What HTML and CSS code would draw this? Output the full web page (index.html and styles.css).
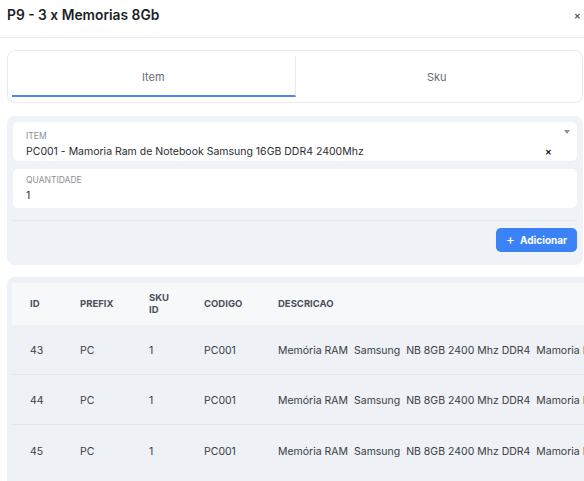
FILE: index.html
```html
<!DOCTYPE html>
<html lang="pt">
<head>
<meta charset="utf-8">
<link rel="stylesheet" href="styles.css">
</head>
<body>
<div class="header">
  <div class="title">P9 - 3 x Memorias 8Gb</div>
  <div class="close">&#x2715;</div>
</div>
<div class="content">
  <div class="tabs">
    <div class="tab active">Item</div>
    <div class="tab">Sku</div>
  </div>
  <div class="form">
    <div class="field select">
      <div class="label">ITEM</div>
      <div class="value">PC001 - Mamoria Ram de Notebook Samsung 16GB DDR4 2400Mhz</div>
      <span class="caret"></span>
      <span class="clear">&#x2715;</span>
    </div>
    <div class="field">
      <div class="label">QUANTIDADE</div>
      <div class="value">1</div>
    </div>
    <div class="actions">
      <button class="btn"><span class="plus">+</span>Adicionar</button>
    </div>
  </div>
  <div class="table">
    <div class="row head">
      <div>ID</div><div>PREFIX</div><div class="narrow">SKU ID</div><div>CODIGO</div><div>DESCRICAO</div>
    </div>
    <div class="row">
      <div>43</div><div>PC</div><div>1</div><div>PC001</div><div class="desc">Memória RAM  Samsung  NB 8GB 2400 Mhz DDR4  Mamoria Ram de Notebook</div>
    </div>
    <div class="row">
      <div>44</div><div>PC</div><div>1</div><div>PC001</div><div class="desc">Memória RAM  Samsung  NB 8GB 2400 Mhz DDR4  Mamoria Ram de Notebook</div>
    </div>
    <div class="row">
      <div>45</div><div>PC</div><div>1</div><div>PC001</div><div class="desc">Memória RAM  Samsung  NB 8GB 2400 Mhz DDR4  Mamoria Ram de Notebook</div>
    </div>
  </div>
</div>
</body>
</html>
```
FILE: styles.css
```css
html, body {
  margin: 0;
  overflow: hidden;
  background: #ffffff;
  font-family: Inter, "Noto Sans", sans-serif;
  color: #222;
}
.header {
  height: 32px;
  padding: 5px 3px 0 7px;
  display: flex;
  justify-content: space-between;
  align-items: flex-start;
  border-bottom: 1px solid #eef0f3;
}
.title {
  font-size: 13.8px;
  line-height: 20px;
  font-weight: 600;
  color: #1b1f27;
}
.close {
  font-size: 8px;
  line-height: 22px;
  color: #555;
  font-weight: 700;
}
.content {
  width: 576px;
  padding: 12px 0 0 7px;
}
.tabs {
  display: flex;
  border: 1px solid #e8eaee;
  border-radius: 8px;
  padding: 5px 4px;
}
.tab {
  flex: 1;
  height: 41px;
  display: flex;
  align-items: center;
  justify-content: center;
  font-size: 11px;
  color: #666b73;
  box-sizing: border-box;
}
.tab.active {
  border-bottom: 2px solid #4f86f0;
  border-right: 1px solid #e6e8eb;
  padding-top: 2px;
}
.form {
  margin-top: 13px;
  background: #eff2f7;
  border-radius: 8px;
  padding: 6px 6px 13px;
  display: flex;
  flex-direction: column;
  gap: 8px;
}
.field {
  position: relative;
  background: #ffffff;
  border-radius: 5px;
  padding: 5px 13px 3px;
  height: 31px;
}
.field.select {
  padding: 8px 13px 0;
}
.label {
  font-size: 8.5px;
  line-height: 12px;
  color: #8a8f96;
  margin-bottom: 2px;
}
.value {
  font-size: 10.5px;
  line-height: 16px;
  color: #2a2d32;
}
.caret {
  position: absolute;
  right: 7px;
  top: 8px;
  width: 0;
  height: 0;
  border-left: 3px solid transparent;
  border-right: 3px solid transparent;
  border-top: 4px solid #8d9198;
}
.clear {
  position: absolute;
  right: 25px;
  top: 25px;
  font-size: 8px;
  font-weight: 700;
  color: #111;
}
.actions {
  border-top: 1px solid #e3e7ed;
  margin-top: 4px;
  padding-top: 7px;
  display: flex;
  justify-content: flex-end;
}
.btn {
  width: 81px;
  height: 24px;
  border: none;
  border-radius: 5px;
  background: #3b82f6;
  color: #fff;
  font-family: Inter, "Noto Sans", sans-serif;
  font-size: 10px;
  font-weight: 700;
  display: flex;
  align-items: center;
  justify-content: center;
  gap: 5px;
  padding: 0;
}
.plus {
  font-size: 14px;
  font-weight: 400;
  line-height: 14px;
  margin-top: -2px;
}
.table {
  margin-top: 12px;
  width: 700px;
  background: #eef1f6;
  border-radius: 8px;
  padding: 6px 0 0 5px;
  height: 220px;
}
.row {
  display: grid;
  grid-template-columns: 50px 69px 55px 74px 1fr;
  padding-left: 18px;
  padding-top: 2px;
  box-sizing: border-box;
  height: 50px;
  align-items: center;
  border-bottom: 1px solid #e3e6ec;
  font-size: 10.5px;
  color: #3a3d42;
}
.row:last-child {
  border-bottom: none;
}
.row.head {
  height: 42px;
  padding-top: 0;
  border-bottom: none;
  background: #f7f8fa;
  font-size: 9.5px;
  font-weight: 700;
  color: #4a505a;
  line-height: 12px;
}
.narrow {
  width: 24px;
}
.desc {
  white-space: pre;
}
```
